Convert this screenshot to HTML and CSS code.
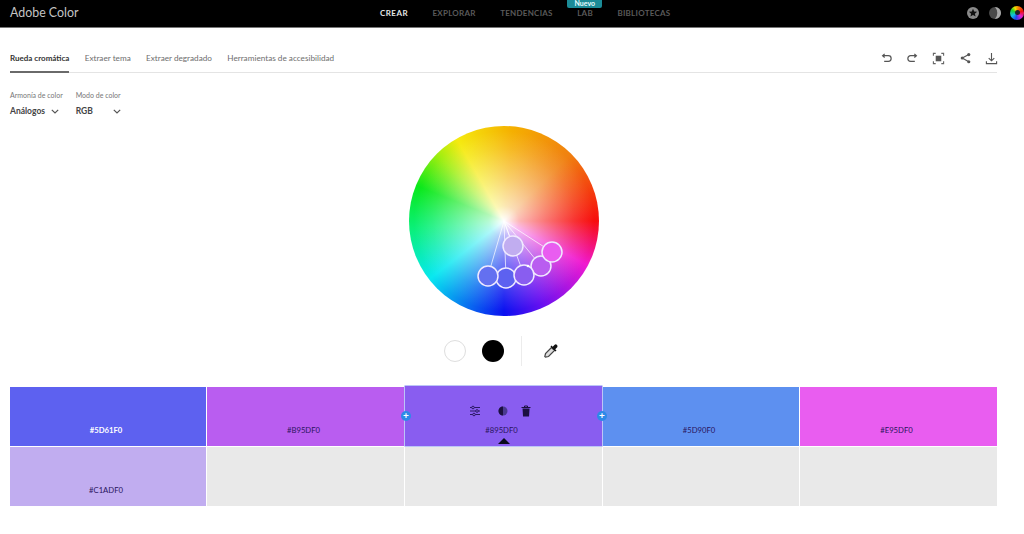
FILE: index.html
```html
<!DOCTYPE html>
<html lang="es">
<head>
<meta charset="utf-8">
<title>Adobe Color</title>
<link rel="stylesheet" href="styles.css">
</head>
<body>
<header class="topbar">
  <div class="brand">Adobe Color</div>
  <nav class="nav">
    <span class="nav-item active">CREAR</span>
    <span class="nav-item">EXPLORAR</span>
    <span class="nav-item">TENDENCIAS</span>
    <span class="nav-item lab"><span class="badge">Nuevo</span>LAB</span>
    <span class="nav-item">BIBLIOTECAS</span>
  </nav>
  <div class="top-icons">
    <svg class="top-icon" viewBox="0 0 14 14"><circle cx="7" cy="7" r="6" fill="#8a8a8a"/><path d="M7 2.8l1.2 2.7 2.9.3-2.2 1.9.7 2.9L7 9.1l-2.6 1.5.7-2.9-2.2-1.9 2.9-.3z" fill="#111"/></svg>
    <svg class="top-icon" viewBox="0 0 14 14"><circle cx="7" cy="7" r="6" fill="#4a4a4a"/><path d="M7 1a6 6 0 0 1 0 12 9 9 0 0 0 0-12z" fill="#a8a8a8"/></svg>
    <div class="mini-wheel"><span class="mini-hole"></span></div>
  </div>
</header>

<main class="main">
  <div class="tabs">
    <div class="tab-list">
      <span class="tab active">Rueda cromática</span>
      <span class="tab">Extraer tema</span>
      <span class="tab">Extraer degradado</span>
      <span class="tab">Herramientas de accesibilidad</span>
    </div>
    <div class="actions">
      <svg class="action" viewBox="0 0 14 14"><path d="M3 4h6a3 3 0 0 1 0 6H4.500M5 2L2.800 4 5 6" fill="none" stroke="#555" stroke-width="1.300"/></svg>
      <svg class="action" viewBox="0 0 14 14"><path d="M11 4H5a3 3 0 0 0 0 6h4.500M9 2l2.200 2L9 6" fill="none" stroke="#555" stroke-width="1.300"/></svg>
      <svg class="action" viewBox="0 0 14 14"><rect x="4" y="4" width="6" height="6" fill="#555"/><path d="M1.500 4V1.500H4M10 1.500h2.500V4M12.500 10v2.500H10M4 12.500H1.500V10" fill="none" stroke="#666" stroke-width="1.200"/></svg>
      <svg class="action" viewBox="0 0 14 14"><path d="M10.500 2.800L3.500 6.500l7 4" fill="none" stroke="#555" stroke-width="1.200"/><circle cx="10.500" cy="2.800" r="1.700" fill="#555"/><circle cx="3.500" cy="6.500" r="1.700" fill="#555"/><circle cx="10.500" cy="10.500" r="1.700" fill="#555"/></svg>
      <svg class="action" viewBox="0 0 14 14"><path d="M7 1v8M4 6.500L7 9.500l3-3M1.500 10v2.500h11V10" fill="none" stroke="#555" stroke-width="1.200"/></svg>
    </div>
  </div>

  <div class="controls">
    <div class="control control-harmony">
      <span class="control-label">Armonía de color</span>
      <span class="control-value">Análogos
        <svg class="chevron" viewBox="0 0 8 5"><path d="M.8.8L4 4 7.200.8" fill="none" stroke="#555" stroke-width="1.200"/></svg>
      </span>
    </div>
    <div class="control">
      <span class="control-label">Modo de color</span>
      <span class="control-value">RGB
        <svg class="chevron chevron-wide" viewBox="0 0 8 5"><path d="M.8.8L4 4 7.200.8" fill="none" stroke="#555" stroke-width="1.200"/></svg>
      </span>
    </div>
  </div>

  <div class="wheel-wrap">
    <div class="wheel">
      <div class="wheel-fade"></div>
      <svg class="wheel-marks" viewBox="0 0 190 190">
        <g stroke="#fff" stroke-opacity=".7" stroke-width="1">
          <line x1="95" y1="95" x2="104" y2="120"/>
          <line x1="95" y1="95" x2="143" y2="126"/>
          <line x1="95" y1="95" x2="132" y2="140"/>
          <line x1="95" y1="95" x2="115" y2="149"/>
          <line x1="95" y1="95" x2="97" y2="152"/>
          <line x1="95" y1="95" x2="79" y2="150"/>
        </g>
        <g stroke="#f0eaff" stroke-width="1.500">
          <circle cx="132" cy="140" r="10" fill="#b95df0"/>
          <circle cx="143" cy="126" r="10" fill="#e95df0"/>
          <circle cx="97" cy="152" r="10" fill="#5d61f0"/>
          <circle cx="79" cy="150" r="10" fill="#6470f0"/>
          <circle cx="115" cy="149" r="10" fill="#895df0"/>
          <circle cx="104" cy="120" r="10" fill="#c1adf0"/>
        </g>
        <circle cx="119" cy="140" r="1.300" fill="#fff"/>
      </svg>
    </div>
  </div>

  <div class="tools">
    <span class="dot dot-white"></span>
    <span class="dot dot-black"></span>
    <span class="divider"></span>
    <svg class="dropper" viewBox="0 0 18 18">
      <path d="M9.500 5.500L3.500 11.500 2.800 14.500l.7.700 3-.7 6-6z" fill="#ddd" stroke="#444" stroke-width="1.200"/>
      <path d="M8.500 4.500l5 5 1-1-1.300-1.300 2-2a1.800 1.800 0 0 0-2.500-2.500l-2 2L9.500 3.500z" fill="#111"/>
    </svg>
  </div>

  <section class="swatches">
    <div class="swatch s1"><span class="hex hex-light">#5D61F0</span></div>
    <div class="swatch s2"><span class="hex">#B95DF0</span></div>
    <div class="swatch s3">
      <span class="plus plus-left">+</span>
      <span class="plus plus-right">+</span>
      <div class="swatch-tools">
        <svg class="swatch-icon" viewBox="0 0 12 12"><path d="M1 2.500h10M1 6h10M1 9.500h10" stroke="#2c1a66" stroke-width="1"/><circle cx="4" cy="2.500" r="1.300" fill="#895df0" stroke="#2c1a66"/><circle cx="8" cy="6" r="1.300" fill="#895df0" stroke="#2c1a66"/><circle cx="5" cy="9.500" r="1.300" fill="#895df0" stroke="#2c1a66"/></svg>
        <svg class="swatch-icon" viewBox="0 0 12 12"><circle cx="6" cy="6" r="4.500" fill="#4a3a90"/><path d="M6 1.500a4.500 4.500 0 0 0 0 9z" fill="#1c1040"/></svg>
        <svg class="swatch-icon" viewBox="0 0 12 12"><path d="M1.500 2.500h9M4.500 2.500V1h3v1.500" stroke="#1c1040" fill="none"/><path d="M2.500 3.500h7L9 11.500H3z" fill="#1c1040"/></svg>
      </div>
      <span class="hex">#895DF0</span>
      <span class="caret"></span>
    </div>
    <div class="swatch s4"><span class="hex">#5D90F0</span></div>
    <div class="swatch s5"><span class="hex">#E95DF0</span></div>
    <div class="swatch s6"><span class="hex">#C1ADF0</span></div>
    <div class="swatch empty"></div>
    <div class="swatch empty"></div>
    <div class="swatch empty"></div>
    <div class="swatch empty"></div>
  </section>
</main>
</body>
</html>
```
FILE: styles.css
```css
* { box-sizing: border-box; }
html, body { margin: 0; height: 100%; }
body {
  background: #fff;
  font-family: Lato, "Open Sans", "Liberation Sans", sans-serif;
  color: #333;
  overflow: hidden;
}

.topbar {
  height: 28px;
  background: #000;
  border-bottom: 1px solid #777;
  display: flex;
  align-items: center;
  padding: 0 0 2px 10px;
  position: relative;
}
.brand {
  color: #c4c4c4;
  font-size: 12.400px;
  font-weight: 400;
  width: 370px;
}
.nav {
  display: flex;
  gap: 24.500px;
  align-items: center;
}
.nav-item {
  color: #5a5a5a;
  font-size: 8px;
  font-weight: 700;
  letter-spacing: .25px;
  white-space: nowrap;
}
.nav-item.active { color: #e6e6e6; letter-spacing: .45px; }
.lab { position: relative; }
.badge {
  position: absolute;
  left: -10px;
  top: -8px;
  width: 35px;
  height: 8px;
  background: #1b8b97;
  color: #e8ffff;
  border-radius: 0 0 2px 2px;
  font-size: 7px;
  line-height: 7px;
  letter-spacing: 0;
  text-align: center;
}
.top-icons {
  margin-left: auto;
  display: flex;
  align-items: center;
  gap: 8px;
}
.top-icon { width: 14px; height: 14px; display: block; }
.mini-wheel {
  width: 14px;
  height: 14px;
  border-radius: 50%;
  background: conic-gradient(#f5a000, #f01010 70deg, #e020d0 130deg, #2040f0 190deg, #10c0e0 240deg, #20d030 300deg, #f5e000 340deg, #f5a000);
  display: flex;
  align-items: center;
  justify-content: center;
}
.mini-hole { width: 5px; height: 5px; border-radius: 50%; background: #222; }

.main { padding: 0 27px 0 10px; }

.tabs {
  height: 45px;
  display: flex;
  justify-content: space-between;
  border-bottom: 1px solid #e4e4e4;
}
.tab-list {
  display: flex;
  gap: 15.300px;
}
.tab {
  font-size: 8.200px;
  color: #6e6e6e;
  height: 45px;
  line-height: 60px;
  white-space: nowrap;
}
.tab.active {
  color: #333;
  border-bottom: 2px solid #6a6a6a;
  font-weight: 700;
  font-size: 8px;
}
.actions {
  display: flex;
  gap: 13.300px;
  align-items: center;
  padding-top: 16px;
  margin-right: -1px;
}
.action { width: 13px; height: 13px; display: block; }

.controls {
  display: flex;
  gap: 13px;
  margin-top: 18px;
  height: 35px;
}
.control { display: flex; flex-direction: column; gap: 7px; }
.control-label { font-size: 7px; color: #777; white-space: nowrap; }
.control-value {
  font-size: 8.500px;
  font-weight: 700;
  color: #444;
  display: flex;
  align-items: center;
  gap: 6px;
}
.chevron { width: 8px; height: 5px; display: block; }
.chevron-wide { margin-left: 14px; }

.wheel-wrap { display: flex; justify-content: center; }
.wheel {
  width: 190px;
  height: 190px;
  border-radius: 50%;
  position: relative;
  overflow: hidden;
  background: conic-gradient(from 90deg, #f70d0d 0deg, #f01ad0 28deg, #6a10f0 65deg, #0a10f0 90deg, #08a0f0 125deg, #08e8f0 142deg, #0af07a 175deg, #0ae81a 202deg, #a0ee10 225deg, #f5ea10 240deg, #f5b000 275deg, #f08010 315deg, #f70d0d 360deg);
}
.wheel-fade {
  position: absolute;
  inset: 0;
  border-radius: 50%;
  background: radial-gradient(circle closest-side, #fff 0%, rgba(255,255,255,.7) 16%, rgba(255,255,255,.42) 45%, rgba(255,255,255,.15) 75%, rgba(255,255,255,0) 95%);
}
.wheel-marks { position: absolute; inset: 0; width: 190px; height: 190px; }

.tools {
  display: flex;
  align-items: center;
  justify-content: center;
  height: 30px;
  margin-top: 20px;
  padding-right: 4px;
}
.dot { width: 22px; height: 22px; border-radius: 50%; display: block; }
.dot-white { background: #fff; border: 1px solid #dedede; margin-right: 16px; }
.dot-black { background: #000; margin-right: 17px; }
.divider { width: 1px; height: 30px; background: #ececec; margin-right: 20px; }
.dropper { width: 18px; height: 18px; display: block; }

.swatches {
  display: grid;
  grid-template-columns: 196px 197px 197px 196px 197px;
  grid-auto-rows: 59px;
  gap: 1px;
  margin-top: 21px;
}
.swatch {
  display: flex;
  flex-direction: column;
  align-items: center;
  justify-content: flex-end;
  padding: 0 4px 10px 0;
  position: relative;
}
.hex {
  font-size: 7.700px;
  line-height: 12px;
  color: #2a1560;
}
.hex-light { color: #fff; font-weight: 700; }
.s1 { background: #5d61f0; }
.s2 { background: #b95df0; }
.s3 { background: #895df0; margin-top: -1px; box-shadow: 0 0 0 .5px #7a8cf0; }
.s4 { background: #5d90f0; }
.s5 { background: #e95df0; }
.s6 { background: #c1adf0; }
.empty { background: #e9e9e9; }
.swatch-tools {
  display: flex;
  gap: 15px;
  margin-bottom: 7px;
  transform: translateX(-1px);
}
.swatch-icon { width: 12px; height: 12px; display: block; }
.swatch-tools .swatch-icon:nth-child(3) { margin-left: -4px; }
.swatch-tools .swatch-icon:nth-child(2) { margin-left: 1px; }
.plus {
  position: absolute;
  top: 25px;
  width: 10px;
  height: 10px;
  border-radius: 50%;
  background: #2d8ae8;
  color: #fff;
  font-size: 10px;
  font-weight: 700;
  line-height: 9px;
  text-align: center;
  z-index: 2;
}
.plus-left { left: -4px; }
.plus-right { right: -5px; }
.caret {
  position: absolute;
  bottom: 2px;
  left: 50%;
  margin-left: -6px;
  width: 0;
  height: 0;
  border-left: 6px solid transparent;
  border-right: 6px solid transparent;
  border-bottom: 6px solid #0a0a1e;
}
```
